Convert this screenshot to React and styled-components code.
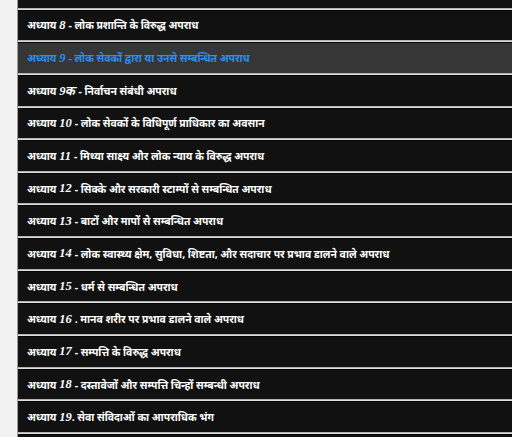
import React from "react";
import styled, { createGlobalStyle } from "styled-components";

const GlobalStyle = createGlobalStyle`
  html, body {
    margin: 0;
    padding: 0;
    background: #f2f2f2;
    overflow: hidden;
  }
`;

const chapters = [
  { num: "8", sep: "-", title: "लोक प्रशान्ति के विरुद्ध अपराध" },
  { num: "9", sep: "-", title: "लोक सेवकों द्वारा या उनसे सम्बन्धित अपराध", active: true },
  { num: "9क", sep: "-", title: "निर्वाचन संबंधी अपराध" },
  { num: "10", sep: "-", title: "लोक सेवकों के विधिपूर्ण प्राधिकार का अवसान" },
  { num: "11", sep: "-", title: "मिथ्या साक्ष्य और लोक न्याय के विरुद्ध अपराध" },
  { num: "12", sep: "-", title: "सिक्के और सरकारी स्टाम्पों से सम्बन्धित अपराध" },
  { num: "13", sep: "-", title: "बाटों और मापों से सम्बन्धित अपराध" },
  { num: "14", sep: "-", title: "लोक स्वास्थ्य क्षेम, सुविधा, शिष्टता, और सदाचार पर प्रभाव डालने वाले अपराध" },
  { num: "15", sep: "-", title: "धर्म से सम्बन्धित अपराध" },
  { num: "16", sep: ".", title: "मानव शरीर पर प्रभाव डालने वाले अपराध" },
  { num: "17", sep: "-", title: "सम्पत्ति के विरुद्ध अपराध" },
  { num: "18", sep: "-", title: "दस्तावेजों और सम्पत्ति चिन्हों सम्बन्धी अपराध" },
  { num: "19", sep: ".", title: "सेवा संविदाओं का आपराधिक भंग", tight: true },
];

const Page = styled.div`
  width: 512px;
  height: 437px;
  padding-left: 17px;
  box-sizing: border-box;
  background: #f2f2f2;
  overflow: hidden;
`;

const List = styled.ul`
  list-style: none;
  margin: -23px 0 0 0;
  padding: 0;
  width: 520px;
  display: flex;
  flex-direction: column;
  gap: 1px;
  background: #dedede;
  border-left: 1px solid #9c9c9c;
`;

const Row = styled.li`
  height: 29.65px;
  display: flex;
  align-items: center;
  padding-left: 9px;
  background: ${(p) => (p.$active ? "#363636" : "#111111")};
  color: ${(p) => (p.$active ? "#2a8ef2" : "#ffffff")};
  border-top: 1px solid #050505;
  border-bottom: 1px solid #b4b4b4;
  font-family: "Noto Sans", "Lohit Devanagari", "FreeSans", sans-serif;
  font-size: 10.4px;
  font-weight: 700;
  white-space: pre;
  overflow: hidden;
`;

const Num = styled.span`
  font-family: "Liberation Serif", serif;
  font-style: italic;
  font-weight: 700;
  font-size: 12.5px;
  margin-right: ${(p) => (p.$tight ? "0" : "3px")};
`;

export default function App() {
  return (
    <>
      <GlobalStyle />
      <Page>
        <List>
          <Row />
          {chapters.map((c) => (
            <Row key={c.num} $active={c.active}>
              {"अध्याय "}
              <Num $tight={c.tight}>{c.num}</Num>
              {c.sep + " " + c.title}
            </Row>
          ))}
          <Row />
        </List>
      </Page>
    </>
  );
}
